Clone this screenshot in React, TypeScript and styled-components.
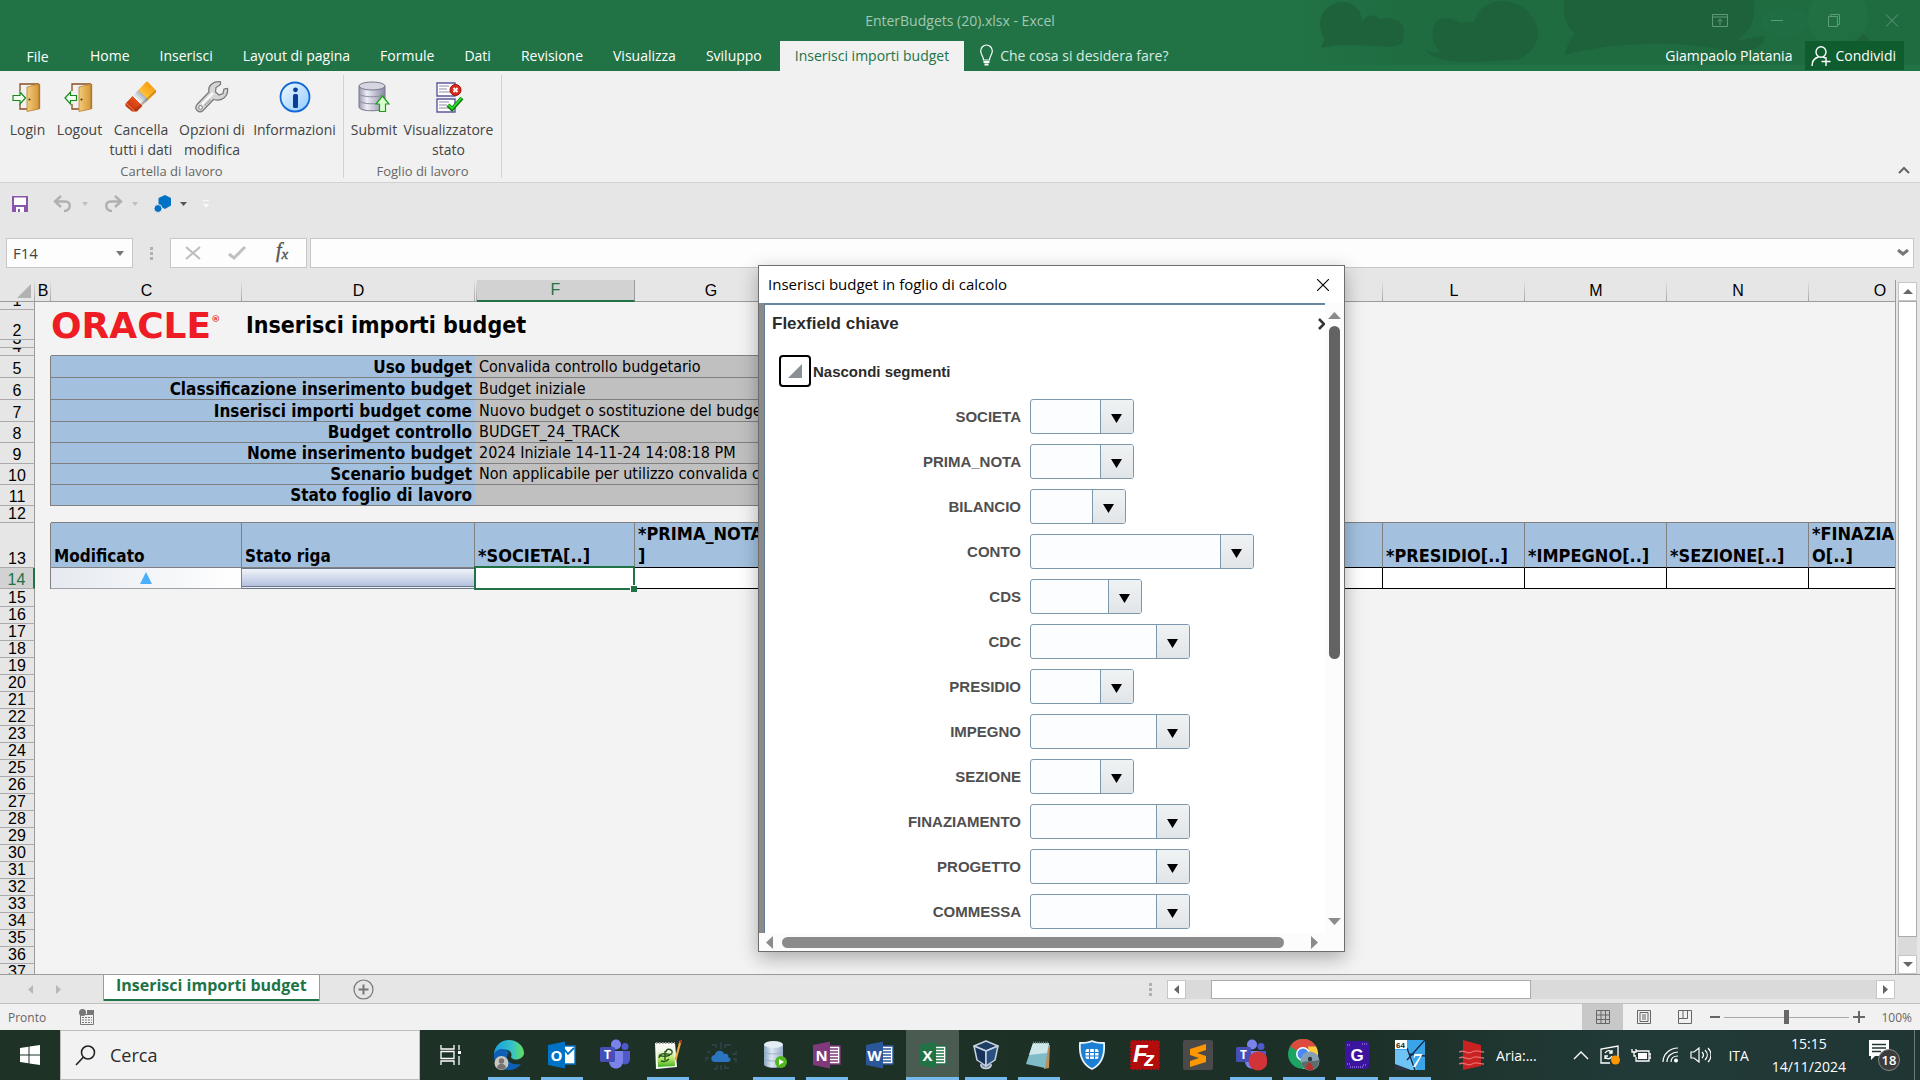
import React from "react";
import styled, { createGlobalStyle, css } from "styled-components";

const UI = `"Open Sans", "Noto Sans", sans-serif`;
const SHEET = `"DejaVu Sans Condensed", "DejaVu Sans", sans-serif`;
const ARIAL = `"Liberation Sans", Arial, sans-serif`;
const GREEN = "#217346";

const Global = createGlobalStyle`
  * { box-sizing: border-box; }
  body { margin: 0; overflow: hidden; background: #e6e6e6; font-family: ${UI}; font-size: 14px; color: #444; }
  button { font: inherit; color: inherit; background: none; border: 0; padding: 0; margin: 0; }
  input { font: inherit; }
  svg { display: block; flex: none; }
`;

const Page = styled.div`
  display: flex;
  flex-direction: column;
  height: 100vh;
`;

/* ---------- title bar and tabs ---------- */
const Header = styled.header`
  position: relative;
  background: ${GREEN};
  color: #fff;
  flex: none;
`;
const HeaderArt = styled.svg`
  position: absolute;
  right: 0;
  top: 0;
`;
const TitleRow = styled.div`
  position: relative;
  display: grid;
  grid-template-columns: 1fr auto 1fr;
  align-items: center;
  height: 41px;
  color: #a3c7b3;
`;
const DocTitle = styled.h1`
  margin: 0;
  grid-column: 2;
  font-size: 14px;
  font-weight: 400;
`;
const WindowButtons = styled.div`
  display: flex;
  justify-content: flex-end;
  gap: 41px;
  padding-right: 21px;
  color: #5f9a79;
`;
const TabRow = styled.nav`
  position: relative;
  display: flex;
  align-items: stretch;
  height: 30px;
`;
const Tab = styled.button<{ $active?: boolean; $file?: boolean }>`
  padding: 0 15px 2px;
  white-space: nowrap;
  ${(p) => p.$file && css`width: 75px; padding-bottom: 0;`}
  ${(p) => p.$active && css`margin-left: 3px; background: #f1f1f1; color: ${GREEN};`}
`;
const TellMe = styled.button`
  display: flex;
  align-items: center;
  gap: 7px;
  padding: 0 16px 2px;
  color: #d9ebe0;
`;
const Account = styled.button`
  margin-left: auto;
  padding: 0 13px 2px;
`;
const Share = styled.button`
  display: flex;
  align-items: center;
  gap: 4px;
  height: 29px;
  margin-right: 16px;
  padding: 0 8px 0 6px;
  background: #0f5c2e;
`;

/* ---------- ribbon ---------- */
const Ribbon = styled.section`
  display: flex;
  flex: none;
  height: 112px;
  padding-top: 4px;
  background: #f1f1f1;
  border-bottom: 1px solid #d2d2d2;
`;
const RibbonGroup = styled.div`
  display: flex;
  flex-direction: column;
  height: 103px;
  padding: 0 4px;
  border-right: 1px solid #d2d2d2;
`;
const GroupButtons = styled.div`
  display: flex;
  flex: 1;
`;
const RibbonButton = styled.button<{ $w: number }>`
  display: flex;
  flex-direction: column;
  align-items: center;
  gap: 7px;
  width: ${(p) => p.$w}px;
  padding-top: 6px;
  line-height: 20px;
  white-space: pre;
`;
const GroupName = styled.div`
  font-size: 13px;
  line-height: 14px;
  text-align: center;
  color: #666;
`;
const Collapse = styled.button`
  display: flex;
  align-items: flex-end;
  margin-left: auto;
  padding: 0 10px 8px;
  color: #666;
`;

/* ---------- quick access and formula bar ---------- */
const QuickBar = styled.div`
  display: flex;
  align-items: center;
  gap: 10px;
  height: 41px;
  margin-bottom: 2px;
  padding: 0 12px;
  flex: none;
`;
const QuickPair = styled.div<{ $before: number }>`
  display: flex;
  align-items: center;
  gap: 8px;
  margin-left: ${(p) => p.$before}px;
`;
const FormulaRow = styled.div`
  display: flex;
  align-items: stretch;
  height: 30px;
  margin: 12px 6px 12px;
  flex: none;
`;
const NameBox = styled.div`
  display: flex;
  align-items: center;
  width: 127px;
  padding: 0 8px 0 0;
  background: #fdfdfd;
  border: 1px solid #c6c6c6;
`;
const NameInput = styled.input`
  flex: 1;
  min-width: 0;
  padding: 0 6px;
  border: 0;
  background: none;
  font-size: 15px;
  color: #444;
`;
const Grip = styled.div`
  display: flex;
  align-items: center;
  justify-content: center;
  width: 37px;
`;
const FormulaTools = styled.div`
  display: flex;
  align-items: center;
  justify-content: space-between;
  width: 137px;
  margin-right: 3px;
  padding: 0 14px;
  background: #fdfdfd;
  border: 1px solid #c6c6c6;
`;
const FormulaBox = styled.div`
  display: flex;
  flex: 1;
  align-items: center;
  padding-right: 4px;
  background: #fdfdfd;
  border: 1px solid #c6c6c6;
`;

/* ---------- sheet ---------- */
const SheetArea = styled.main`
  display: flex;
  flex: 1;
  min-height: 0;
  border-bottom: 1px solid #9b9b9b;
`;
const SheetClip = styled.div`
  flex: 1;
  min-width: 0;
  overflow: hidden;
  background: linear-gradient(#e6e6e6 22px, #f3f3f3 22px);
  border-right: 1px solid #9b9b9b;
`;
const Grid = styled.table`
  width: 1951px;
  table-layout: fixed;
  border-collapse: separate;
  border-spacing: 0;
  font-family: ${SHEET};
  font-size: 16px;
  color: #000;
  td, th { padding: 0; font-weight: 400; }
`;
const ColHead = styled.th<{ $on?: boolean }>`
  height: 22px;
  font-family: ${ARIAL};
  line-height: 20px;
  vertical-align: bottom;
  background: linear-gradient(#e6e6e6, #a6a6a6) right / 1px 100% no-repeat #e6e6e6;
  border-bottom: 1px solid #9b9b9b;
  ${(p) => p.$on && css`
    background: #d2d2d2;
    color: ${GREEN};
    border-bottom: 2px solid ${GREEN};
    border-right: 1px solid #9b9b9b;
  `}
`;
const Corner = styled(ColHead)`
  svg { margin: 0 0 3px 17px; }
`;
const RowHead = styled.th<{ $on?: boolean }>`
  font-family: ${ARIAL};
  background: #e6e6e6;
  border-right: 1px solid #9b9b9b;
  border-bottom: 1px solid #ababab;
  ${(p) => p.$on && css`
    background: #d2d2d2;
    color: ${GREEN};
    border-right: 2px solid ${GREEN};
  `}
`;
const Clip = styled.div<{ $h: number }>`
  display: flex;
  align-items: flex-end;
  justify-content: center;
  height: ${(p) => p.$h - 1}px;
  line-height: 17px;
  overflow: hidden;
`;
const Logo = styled.div`
  display: flex;
  align-items: center;
  height: 29px;
  color: #ee1c25;
  font-family: "DejaVu Sans", sans-serif;
  font-size: 36px;
  font-weight: 700;
  line-height: 29px;
  sup { font-size: 9px; line-height: 16px; align-self: flex-start; }
`;
const SheetTitle = styled.td`
  line-height: 29px;
  font-size: 23px;
  padding-left: 4px !important;
  strong { display: block; height: 29px; white-space: nowrap; }
`;
const InfoLabel = styled.td`
  background: #a3c1df;
  border-bottom: 1px solid #808080;
  font-size: 17px;
  text-align: right;
  vertical-align: bottom;
  padding-right: 3px !important;
  line-height: 20px;
  white-space: nowrap;
  overflow: hidden;
`;
const InfoValue = styled.td`
  background: #c0c0c0;
  border-bottom: 1px solid #808080;
  padding-left: 4px !important;
  line-height: 20px;
  vertical-align: bottom;
  white-space: nowrap;
  overflow: hidden;
`;
const EdgeCell = styled.td`
  border-right: 1px solid #808080;
`;
const TopLine = styled.td`
  border-bottom: 1px solid #808080;
`;
const HeadCell = styled.td<{ $dark?: boolean; $key?: boolean }>`
  height: 45px;
  vertical-align: bottom;
  background: #a3c1df;
  border-right: 1px solid #808080;
  border-bottom: 1px solid ${(p) => (p.$dark ? "#000" : "#808080")};
  padding-left: 3px !important;
  font-size: ${(p) => (p.$key ? 18 : 17)}px;
  line-height: 22px;
  white-space: pre;
  overflow: hidden;
`;
const EmptyCell = styled.td`
  background: #fff;
  border-right: 1px solid #000;
  border-bottom: 1px solid #000;
`;
const ChangedCell = styled.td`
  background: linear-gradient(90deg, #e6eaf0, #fff);
  border-right: 1px solid #808080;
  border-bottom: 1px solid #a0a0a8;
  svg { margin: 0 auto; }
`;
const StatusCell = styled.td`
  background: linear-gradient(#f0f3fa, #b5c1de);
  border-top: 1px solid #6b7888;
  border-bottom: 3px double #6b7888;
`;
const ActiveCell = styled.td`
  position: relative;
  background: #fff;
  &::before {
    content: "";
    position: absolute;
    inset: -2px 0 -1px -1px;
    border: 2px solid ${GREEN};
  }
  &::after {
    content: "";
    position: absolute;
    right: -2px;
    bottom: -3px;
    width: 6px;
    height: 6px;
    background: ${GREEN};
    border: solid #fff;
    border-width: 1px 0 0 1px;
  }
`;

/* ---------- scroll bars ---------- */
const VScroll = styled.div`
  display: flex;
  flex-direction: column;
  width: 24px;
  padding: 2px 3px 0 2px;
`;
const ScrollButton = styled.button`
  display: grid;
  place-items: center;
  width: 19px;
  height: 19px;
  flex: none;
  background: #fff;
  border: 1px solid #c6c6c6;
  color: #666;
`;
const VTrack = styled.div`
  flex: 1;
  padding-bottom: 18px;
  background: #dadada;
`;
const Thumb = styled.div`
  height: 100%;
  background: #fff;
  border: 1px solid #ababab;
`;
const SheetTabs = styled.div`
  display: flex;
  align-items: center;
  height: 29px;
  flex: none;
  padding-right: 25px;
  border-bottom: 1px solid #c0c0c0;
`;
const TabNav = styled.div`
  display: flex;
  gap: 23px;
  width: 103px;
  padding-left: 28px;
  color: #b8b8b8;
`;
const SheetTab = styled.button`
  align-self: flex-start;
  height: 26px;
  padding: 0 12px 5px;
  background: #fff;
  border: solid #9b9b9b;
  border-width: 0 1px;
  box-shadow: inset 0 -2px ${GREEN};
  color: ${GREEN};
  font-size: 16px;
  font-weight: 700;
  line-height: 21px;
`;
const AddTab = styled.button`
  margin-left: 33px;
  color: #777;
`;
const HScroll = styled.div`
  display: flex;
  align-items: center;
  width: 746px;
  margin-left: auto;
`;
const HTrack = styled.div`
  flex: 1;
  height: 19px;
  padding: 0 345px 0 25px;
  background: #dadada;
`;
const SplitGrip = styled.div`
  width: 18px;
`;

/* ---------- status bar ---------- */
const StatusBar = styled.footer`
  display: flex;
  align-items: center;
  height: 26px;
  flex: none;
  padding: 0 8px;
  background: #f1f1f1;
  font-size: 12px;
  color: #666;
`;
const RecordIcon = styled.button`
  margin-left: 33px;
`;
const Views = styled.div`
  display: flex;
  align-self: stretch;
  margin: 0 5px 0 auto;
`;
const ViewButton = styled.button<{ $on?: boolean }>`
  display: grid;
  place-items: center;
  width: 41px;
  background: ${(p) => (p.$on ? "#c8c8c8" : "none")};
`;
const ZoomRange = styled.input`
  appearance: none;
  width: 125px;
  height: 17px;
  margin: 0 4px;
  background: linear-gradient(#a8a8a8, #a8a8a8) center / 100% 1px no-repeat;
  &::-webkit-slider-thumb {
    appearance: none;
    width: 5px;
    height: 14px;
    background: #666;
  }
`;
const ZoomValue = styled.span`
  width: 47px;
  text-align: right;
`;

/* ---------- taskbar ---------- */
const Taskbar = styled.div`
  display: flex;
  height: 50px;
  flex: none;
  background: linear-gradient(90deg, #1e3226, #1c3027 70%, #213a38 85%, #203634);
  color: #fff;
`;
const Start = styled.button`
  display: grid;
  place-items: center;
  width: 60px;
`;
const Search = styled.label`
  display: flex;
  align-items: center;
  gap: 14px;
  width: 360px;
  padding: 0 14px;
  background: #f2f2f2;
  border: 1px solid #bdbdbd;
`;
const SearchInput = styled.input`
  flex: 1;
  min-width: 0;
  padding: 0;
  border: 0;
  background: none;
  font-size: 18px;
  color: #2b2b2b;
  &::placeholder { color: #2b2b2b; opacity: 1; }
`;
const Apps = styled.div`
  display: flex;
`;
const TaskButton = styled.button<{ $open?: boolean; $on?: boolean; $w?: number }>`
  display: grid;
  place-items: center;
  width: ${(p) => p.$w ?? 53}px;
  background: linear-gradient(#76b9ed, #76b9ed) bottom / ${(p) => (p.$on ? "100%" : "42px")}
    ${(p) => (p.$open ? "3px" : "0")} no-repeat ${(p) => (p.$on ? "#4a5b52" : "transparent")};
`;
const Tray = styled.div`
  display: flex;
  align-items: center;
  margin-left: auto;
`;
const AriaButton = styled.button`
  display: flex;
  align-items: center;
  gap: 12px;
  margin-right: 36px;
`;
const TrayIcons = styled.div`
  display: flex;
  align-items: center;
  gap: 11px;
`;
const Lang = styled.button`
  width: 24px;
  margin: 0 21px 0 16px;
`;
const Clock = styled.button`
  line-height: 23px;
  margin-right: 22px;
`;
const Notices = styled.button`
  margin-right: 14px;
`;
const ShowDesktop = styled.button`
  align-self: stretch;
  width: 6px;
  border-left: 1px solid #6b7a76;
`;

/* ---------- dialog ---------- */
const Dialog = styled.section`
  position: absolute;
  left: 758px;
  top: 265px;
  display: flex;
  flex-direction: column;
  width: 587px;
  height: 687px;
  background: #fff;
  border: 1px solid #6e6e6e;
  box-shadow: 0 6px 18px rgba(0, 0, 0, 0.3);
  color: #000;
`;
const DialogBar = styled.div`
  display: flex;
  align-items: center;
  justify-content: space-between;
  height: 37px;
  padding: 0 15px 0 9px;
  flex: none;
`;
const DialogTitle = styled.h2`
  margin: 0;
  font-size: 15px;
  font-weight: 400;
  line-height: 20px;
  padding-bottom: 2px;
`;
const DialogMain = styled.div`
  display: flex;
  flex: 1;
  min-height: 0;
  padding-left: 5px;
  background: linear-gradient(90deg, #8a8a8a 5px, #fcfcfc 5px);
`;
const Pane = styled.div`
  flex: 1;
  min-width: 0;
  background: #fff;
  border-left: 1px solid #5d7d98;
  border-top: 2px solid #6787a0;
  font-family: ${ARIAL};
  overflow: hidden;
`;
const PaneHead = styled.div`
  display: flex;
  align-items: center;
  justify-content: space-between;
  height: 38px;
  padding-left: 7px;
`;
const PaneTitle = styled.h3`
  margin: 0;
  font-size: 17px;
  font-weight: 700;
  color: #2b2b2b;
`;
const Disclosure = styled.div`
  display: flex;
  align-items: center;
  gap: 2px;
  margin: 12px 0 12px 14px;
  font-size: 15px;
  font-weight: 700;
  color: #2b2b2b;
`;
const DisclosureButton = styled.button`
  display: grid;
  place-items: center;
  width: 32px;
  height: 32px;
  border: 2px solid #000;
  border-radius: 4px;
`;
const Field = styled.div`
  display: grid;
  grid-template-columns: 256px auto;
  justify-content: start;
  align-items: center;
  column-gap: 9px;
  height: 35px;
  margin-bottom: 10px;
`;
const FieldLabel = styled.label`
  font-size: 15px;
  font-weight: 700;
  text-align: right;
  color: #4f4f4f;
`;
const Combo = styled.div<{ $w: number }>`
  display: flex;
  width: ${(p) => p.$w}px;
  height: 35px;
  background: #fcfdfe;
  border: 1px solid #7e98ab;
  border-radius: 3px;
  overflow: hidden;
`;
const ComboInput = styled.input`
  flex: 1;
  min-width: 0;
  padding: 0 6px;
  border: 0;
  background: none;
  font-size: 15px;
`;
const ComboButton = styled.button`
  display: grid;
  place-items: center;
  width: 33px;
  padding: 3px 2px 0 0;
  border-left: 1px solid #7e98ab;
  background: linear-gradient(#f0f3f4, #e1e5e8);
`;
const PaneScroll = styled.div`
  display: flex;
  flex-direction: column;
  align-items: center;
  gap: 7px;
  width: 19px;
  padding: 9px 0 8px;
  color: #8b8b8b;
`;
const PaneTrack = styled.div`
  flex: 1;
  width: 11px;
`;
const PaneThumb = styled.div`
  height: 57%;
  border-radius: 6px;
  background: #636363;
`;
const BottomScroll = styled.div`
  display: flex;
  align-items: center;
  gap: 9px;
  height: 18px;
  flex: none;
  padding: 0 26px 0 7px;
  background: #fcfcfc;
  color: #8b8b8b;
`;
const BottomTrack = styled.div`
  flex: 1;
  padding-right: 18px;
`;
const BottomThumb = styled.div`
  height: 11px;
  border-radius: 6px;
  background: #8b8b8b;
`;

/* ---------- small drawings ---------- */
type Dir = "up" | "down" | "left" | "right";
const triangles: Record<Dir, string> = {
  up: "0,10 5,0 10,10",
  down: "0,0 10,0 5,10",
  left: "10,0 0,5 10,10",
  right: "0,0 10,5 0,10",
};
const Tri = ({ d, w = 10, h = 5, c = "currentColor" }: { d: Dir; w?: number; h?: number; c?: string }) => (
  <svg width={w} height={h} viewBox="0 0 10 10" preserveAspectRatio="none"><polygon points={triangles[d]} fill={c} /></svg>
);
const Dots = () => (
  <svg width="3" height="13" fill="#b0b0b0"><path d="M0 0h3v3H0zM0 5h3v3H0zM0 10h3v3H0z" /></svg>
);

const DoorDefs = () => (
  <defs><linearGradient id="door"><stop offset="0" stopColor="#f4cc78" /><stop offset="1" stopColor="#d4973a" /></linearGradient></defs>
);
const Door = ({ out }: { out?: boolean }) => (
  <svg width="32" height="32" viewBox="0 0 32 32">
    <DoorDefs />
    <path d="M8 10V3h19M8 23v5h7" fill="none" stroke="#8a4e20" strokeWidth="1.300" />
    <path d="M15 6l12-3v25l-12 2.500z" fill="url(#door)" stroke="#b98232" strokeWidth=".8" />
    <path d="M27.500 3v25" stroke="#b07628" strokeWidth="1.300" />
    <circle cx="17.500" cy="18.500" r="1.100" fill="#5a3a0d" />
    {out
      ? <path d="M1 17l5.500-6v3.500h6v5h-6V23z" fill="#f0fff0" stroke="#188a18" strokeWidth="1.200" />
      : <path d="M13.500 17L8 11v3.500H1v5h7V23z" fill="#f0fff0" stroke="#188a18" strokeWidth="1.200" />}
  </svg>
);
const Eraser = () => (
  <svg width="32" height="32" viewBox="0 0 32 32">
    <defs><linearGradient id="er" x1="0" y1="1" x2="1" y2="0"><stop offset="0" stopColor="#b82a06" /><stop offset=".37" stopColor="#e8501e" /><stop offset=".38" stopColor="#f4f7f9" /><stop offset=".56" stopColor="#aab5bd" /><stop offset=".57" stopColor="#ffc13a" /><stop offset="1" stopColor="#f08c00" /></linearGradient></defs>
    <path d="M.5 22.500L21 1l1.500-.5 8.500 9v2L12 30.500H7L.5 25z" fill="url(#er)" />
    <path d="M1 22l9 8.500" stroke="#e98a60" strokeWidth="1" />
    <path d="M9 30l2 .5 20-20v-1.500L10 27.500z" fill="#5a2a00" opacity=".3" />
  </svg>
);
const Wrench = () => (
  <svg width="34" height="32" viewBox="0 0 34 32">
    <path d="M25.500.8C19 0 12.500 4 14 11L2 23.500c-3.500 4.500 2 9.500 6 6L18.500 18.500c8 2.500 15-3 14-11L29 8l-1 4.500-4 1.500-3.500-3 .5-4.500 4.500-3z" fill="#d6d6d6" stroke="#777" strokeWidth="1.200" />
    <path d="M7 23.500L18 12" stroke="#fafafa" strokeWidth="2.500" /><path d="M10 24l5-5" stroke="#999" strokeWidth="2" strokeDasharray="1 1" />
    <circle cx="5.500" cy="26.500" r="1.800" fill="#fff" stroke="#777" />
  </svg>
);
const Info = () => (
  <svg width="32" height="32" viewBox="0 0 32 32">
    <defs><linearGradient id="inf" x1="0" y1="0" x2="1" y2="1"><stop offset="0" stopColor="#f4fbff" /><stop offset="1" stopColor="#8ec9ff" /></linearGradient></defs>
    <circle cx="16" cy="16" r="14.500" fill="url(#inf)" stroke="#1268d6" strokeWidth="1.800" />
    <circle cx="16.500" cy="8.800" r="2.400" fill="#0a3c9b" />
    <rect x="14" y="13" width="5" height="14" rx="1.500" fill="#0a3c9b" />
  </svg>
);
const Submit = () => (
  <svg width="32" height="32" viewBox="0 0 32 32">
    <defs><linearGradient id="cyl"><stop offset="0" stopColor="#9a9aae" /><stop offset=".3" stopColor="#eeeef8" /><stop offset="1" stopColor="#8888a0" /></linearGradient></defs>
    <path d="M1 5v21c0 5 26 5 26 0V5z" fill="url(#cyl)" stroke="#77778c" />
    <ellipse cx="14" cy="5" rx="13" ry="4" fill="#d6d6e2" stroke="#77778c" />
    <path d="M1 12c0 5 26 5 26 0M1 19c0 5 26 5 26 0" fill="none" stroke="#8a8a9e" />
    <path d="M24.500 15l6.500 8h-3.500v7.500h-6V23H18z" fill="#d9ffd0" stroke="#1c9a1c" strokeWidth="1.200" />
  </svg>
);
const Viewer = () => (
  <svg width="32" height="32" viewBox="0 0 32 32">
    <path d="M4 2h18v13H4zM4 18h18v13H4z" fill="#fff" stroke="#5a5a9c" strokeWidth="1.400" />
    <path d="M6 5h10M6 8h8M6 11h12M6 21h10M6 24h8M6 27h12" stroke="#8a8aa8" />
    <circle cx="22.500" cy="9" r="5.500" fill="#e0281c" stroke="#971108" />
    <path d="M20.500 7l4 4m0-4l-4 4" stroke="#fff" strokeWidth="1.800" />
    <path d="M15 24l4 4 10-11" fill="none" stroke="#0b7a0b" strokeWidth="4" />
    <path d="M15.500 24l3.500 3.500 9.500-10.500" fill="none" stroke="#2fe02f" strokeWidth="1.800" />
  </svg>
);

const groups = [
  { name: "Cartella di lavoro", items: [
    { t: "Login", w: 47, i: <Door /> },
    { t: "Logout", w: 57, i: <Door out /> },
    { t: "Cancella\ntutti i dati", w: 66, i: <Eraser /> },
    { t: "Opzioni di\nmodifica", w: 76, i: <Wrench /> },
    { t: "Informazioni", w: 89, i: <Info /> },
  ] },
  { name: "Foglio di lavoro", items: [
    { t: "Submit", w: 52, i: <Submit /> },
    { t: "Visualizzatore\nstato", w: 97, i: <Viewer /> },
  ] },
];

const tabs = ["Home", "Inserisci", "Layout di pagina", "Formule", "Dati", "Revisione", "Visualizza", "Sviluppo"];

const cols: [string, number][] = [
  ["", 35], ["B", 16], ["C", 191], ["D", 233], ["", 2], ["F", 158], ["G", 152], ["H", 149], ["I", 149],
  ["J", 149], ["K", 149], ["L", 142], ["M", 142], ["N", 142], ["O", 142],
];

const info: [number, number, string, string][] = [
  [5, 22, "Uso budget", "Convalida controllo budgetario"],
  [6, 22, "Classificazione inserimento budget", "Budget iniziale"],
  [7, 22, "Inserisci importi budget come", "Nuovo budget o sostituzione del budget"],
  [8, 21, "Budget controllo", "BUDGET_24_TRACK"],
  [9, 21, "Nome inserimento budget", "2024 Iniziale 14-11-24 14:08:18 PM"],
  [10, 21, "Scenario budget", "Non applicabile per utilizzo convalida controllo"],
  [11, 21, "Stato foglio di lavoro", ""],
];

const heads = ["*PRIMA_NOTA[..\n]", "*BILANCIO[..]", "*CONTO[..]", "*CDS[..]", "*CDC[..]", "*PRESIDIO[..]", "*IMPEGNO[..]", "*SEZIONE[..]", "*FINAZIAMENT\nO[..]"];
const tailRows = Array.from({ length: 23 }, (_, i) => 15 + i);

const fields: [string, number][] = [
  ["SOCIETA", 104], ["PRIMA_NOTA", 104], ["BILANCIO", 96], ["CONTO", 224], ["CDS", 112], ["CDC", 160],
  ["PRESIDIO", 104], ["IMPEGNO", 160], ["SEZIONE", 104], ["FINAZIAMENTO", 160], ["PROGETTO", 160], ["COMMESSA", 160],
];

const RowNo = ({ n, h, on }: { n: number; h: number; on?: boolean }) => (
  <RowHead scope="row" $on={on}><Clip $h={h}>{n}</Clip></RowHead>
);

const Sheet = () => (
  <Grid>
    <colgroup>{cols.map(([, w], i) => <col key={i} style={{ width: w }} />)}</colgroup>
    <thead>
      <tr>
        {cols.map(([c], i) => i === 0
          ? <Corner key={i}><svg width="14" height="14"><path d="M14 0v14H0z" fill="#b2b2b2" /></svg></Corner>
          : <ColHead key={i} scope="col" $on={c === "F"}>{c}</ColHead>)}
      </tr>
    </thead>
    <tbody>
      <tr><RowNo n={1} h={8} /><td colSpan={14} /></tr>
      <tr>
        <RowNo n={2} h={30} />
        <td />
        <td><Logo>ORACLE<sup>®</sup></Logo></td>
        <SheetTitle colSpan={4}><strong>Inserisci importi budget</strong></SheetTitle>
      </tr>
      <tr><RowNo n={3} h={8} /><td colSpan={14} /></tr>
      <tr><RowNo n={4} h={8} /><td /><TopLine colSpan={6} /></tr>
      {info.map(([n, h, a, b]) => (
        <tr key={n}>
          <RowNo n={n} h={h} />
          <EdgeCell />
          <InfoLabel colSpan={2}><strong>{a}</strong></InfoLabel>
          <InfoValue colSpan={4}>{b}</InfoValue>
        </tr>
      ))}
      <tr><RowNo n={12} h={17} /><td /><TopLine colSpan={13} /></tr>
      <tr>
        <RowNo n={13} h={45} />
        <EdgeCell />
        <HeadCell><strong>Modificato</strong></HeadCell>
        <HeadCell><strong>Stato riga</strong></HeadCell>
        <HeadCell colSpan={2} $key><strong>*SOCIETA[..]</strong></HeadCell>
        {heads.map((t) => <HeadCell key={t} $dark $key><strong>{t}</strong></HeadCell>)}
      </tr>
      <tr>
        <RowNo n={14} h={21} on />
        <EdgeCell />
        <ChangedCell><svg width="12" height="12"><path d="M6 0l6 12H0z" fill="#4aaefc" /></svg></ChangedCell>
        <StatusCell />
        <ActiveCell colSpan={2} />
        {heads.map((t) => <EmptyCell key={t} />)}
      </tr>
      {tailRows.map((n) => <tr key={n}><RowNo n={n} h={n === 15 ? 18 : 17} /><td colSpan={14} /></tr>)}
    </tbody>
  </Grid>
);

/* ---------- taskbar drawings ---------- */
const Office = ({ l, c, d, children }: { l: string; c: string; d: string; children?: React.ReactNode }) => (
  <svg width="28" height="28" viewBox="0 0 28 28">
    <path d="M14 5h13v18H14z" fill="#fff" stroke={c} strokeWidth="1.400" />
    {children ?? <path d="M17 8h8M17 11h8M17 14h8M17 17h8M17 20h8" stroke={d} strokeWidth="1.500" />}
    <path d="M0 4l17-3.500v27L0 24z" fill={c} />
    <text x="8.500" y="19.500" fontFamily="Open Sans" fontWeight="700" fontSize="15" fill="#fff" textAnchor="middle">{l}</text>
  </svg>
);
const TeamsIcon = ({ busy }: { busy?: boolean }) => (
  <svg width="32" height="32" viewBox="0 0 32 32">
    <circle cx="17" cy="5.500" r="5" fill="#7b83eb" /><circle cx="26" cy="7.500" r="3.500" fill="#5059c9" />
    <path d="M22 12h9v8c0 6-7 7-9 3z" fill="#5059c9" /><path d="M10 12h14v10c0 10-14 10-14 0z" fill="#7b83eb" />
    <rect x="1" y="8" width="15" height="15" rx="1.500" fill="#464eb8" />
    <text x="8.500" y="20" fontFamily="Open Sans" fontWeight="700" fontSize="12" fill="#fff" textAnchor="middle">T</text>
    {busy && <circle cx="23" cy="22" r="9.500" fill="#d13438" />}
  </svg>
);
const TaskView = () => (
  <svg width="22" height="22" viewBox="0 0 22 22" fill="none" stroke="#fff" strokeWidth="1.300">
    <path d="M1 1v4h13V1M1 21v-4h13v4M1 7.500h13v7H1zM19 1v5M19 12v9" /><path d="M18 7h3v3h-3z" fill="#fff" stroke="none" />
  </svg>
);
const Edge = () => (
  <svg width="32" height="32" viewBox="0 0 32 32">
    <defs><linearGradient id="ed"><stop offset="0" stopColor="#1b9de2" /><stop offset=".6" stopColor="#35c1c8" /><stop offset="1" stopColor="#66e05a" /></linearGradient></defs>
    <path d="M1 16C1 7 8 1 16 1s15 6 15 13c0 6-10 9-13 4 2-4-2-8-7-7C6 12 2 14 1 16z" fill="url(#ed)" />
    <path d="M1 15c3-6 12-7 15-1-4 3-3 13 12 11-3 4-7 6-12 6C7 31 0 24 1 15z" fill="#0f5fb4" />
    <circle cx="8.500" cy="24" r="7" fill="#c9c6c2" /><circle cx="8.500" cy="22" r="2.700" fill="#77736f" /><path d="M4 28.500c1-5 8-5 9 0-2 2.500-7 2.500-9 0z" fill="#77736f" />
  </svg>
);
const Npp = () => (
  <svg width="30" height="30" viewBox="0 0 30 30">
    <defs><linearGradient id="npp" x1="0" y1="0" x2="0" y2="1"><stop offset=".2" stopColor="#f4f8ee" /><stop offset=".6" stopColor="#b9e86a" /><stop offset="1" stopColor="#3fb020" /></linearGradient></defs>
    <path d="M2 3h20l2 24-21 2z" fill="#f8faf4" /><path d="M4 6h17l1 20-17 1z" fill="url(#npp)" /><path d="M3 3h19" stroke="#999" strokeWidth="2" strokeDasharray="1.500 1.500" />
    <path d="M6 18c1-6 6-4 8-4s6 2 5-3c-2-3-6-2-6 1M6 15c4 2 7 2 11 0M8 21c3 1 6 0 8-2M12 11v9" fill="none" stroke="#25551d" strokeWidth="1.400" />
    <path d="M27.500 1l-5 19" stroke="#e9a83a" strokeWidth="2.200" /><path d="M28 0l-.7 3" stroke="#b2302a" strokeWidth="2.200" />
  </svg>
);
const CloudIcon = () => (
  <svg width="32" height="32" viewBox="0 0 32 32">
    <path d="M10 23c-5 0-5-7 0-7 0-5 8-6 9-1 4-1 5 2 4 3 4 1 3 5 0 5z" fill="#2a74c0" />
    <path d="M16 10V3M11 9V6H7M20 9V6h6M5 13H2M27 15h4V12M4 19H1v3M28 20h3v4M12 26v4H9M16 26v5M20 26v3h4" fill="none" stroke="#34464e" strokeWidth="1.300" />
  </svg>
);
const Db = () => (
  <svg width="28" height="32" viewBox="0 0 28 32">
    <defs><linearGradient id="db"><stop offset="0" stopColor="#8aa6c2" /><stop offset=".4" stopColor="#dce8f2" /><stop offset="1" stopColor="#96aec6" /></linearGradient></defs>
    <path d="M4 5v20c0 5 19 5 19 0V5z" fill="url(#db)" /><ellipse cx="13.500" cy="5.500" rx="9.500" ry="3.500" fill="#e4eef6" />
    <path d="M4 12c0 4 19 4 19 0M4 19c0 4 19 4 19 0" fill="none" stroke="#90a8c0" strokeWidth=".8" />
    <circle cx="21" cy="23" r="6" fill="#4fb81e" /><path d="M19 20l5 3-5 3z" fill="#fff" />
  </svg>
);
const VBox = () => (
  <svg width="28" height="32" viewBox="0 0 28 32" stroke="#c9d3e0" strokeWidth="1.500" strokeLinejoin="round">
    <path d="M9 25c-2 6 12 6 10 0" fill="#8190a8" />
    <path d="M2 7l12-5 12 5-12 5z" fill="#1f3e66" /><path d="M2 7l12 5v15L5 21z" fill="#17335a" /><path d="M26 7l-12 5v15l9-6z" fill="#2a5080" />
  </svg>
);
const Note = () => (
  <svg width="30" height="30" viewBox="0 0 30 30">
    <path d="M20 3l6 2-1 23-5 1z" fill="#b98e57" /><path d="M9 3h16l-4 25L2 24z" fill="#7fbcc8" /><path d="M9 3h16l-2 10L5 15z" fill="#cfe6ea" />
    <path d="M9 2.500h16" stroke="#777" strokeWidth="2" strokeDasharray="1 1" />
  </svg>
);
const Shield = () => (
  <svg width="28" height="30" viewBox="0 0 28 30">
    <path d="M14 1c4 2 8 2 12 2 1 12-2 21-12 26C4 24 1 15 2 3c4 0 8 0 12-2z" fill="#1c7fd4" stroke="#e8f1f8" strokeWidth="1.800" />
    <rect x="7.500" y="9" width="13" height="10" rx="2" fill="#fff" /><path d="M11.500 9v10M16.500 9v10M7 12.500h14M7 16h14" stroke="#1c7fd4" strokeWidth="1.200" />
  </svg>
);
const Fz = () => (
  <svg width="30" height="30" viewBox="0 0 30 30">
    <rect x="1" y="1" width="28" height="28" fill="#b30c0c" stroke="#b30c0c" strokeWidth="2" strokeDasharray="2 1.500" />
    <text x="3" y="22" fontFamily="Liberation Sans" fontStyle="italic" fontWeight="700" fontSize="24" fill="#fff">F</text>
    <text x="14" y="26" fontFamily="Liberation Sans" fontStyle="italic" fontWeight="700" fontSize="21" fill="#fff">z</text>
  </svg>
);
const Sublime = () => (
  <svg width="30" height="30" viewBox="0 0 30 30">
    <rect width="30" height="30" rx="2" fill="#4a4a4a" /><path d="M7 9l16-5v6l-9 3 9 3v6L7 27v-6l9-3-9-3z" fill="#ff9800" />
  </svg>
);
const Chrome = () => (
  <svg width="32" height="32" viewBox="0 0 32 32">
    <circle cx="15" cy="15" r="15" fill="#1da462" /><path d="M15 15L2 7.500A15 15 0 0 1 28 7.500z" fill="#dd4b3e" /><path d="M15 0a15 15 0 0 1 13 7.500H15z" fill="#dd4b3e" />
    <path d="M28 7.500A15 15 0 0 1 15 30l7-11-2-11.500z" fill="#ffcd40" /><circle cx="15" cy="15" r="7" fill="#fff" /><circle cx="15" cy="15" r="5.500" fill="#4a8af4" />
    <circle cx="22" cy="22" r="9.500" fill="#86a0b4" /><path d="M13 24c5-3 12-1 18-3 0 6-4 10-9 10s-8-3-9-7z" fill="#5e6c6c" /><path d="M18 30c0-8 7-8 7 1-2 .5-5 .5-7-1z" fill="#b8332f" /><circle cx="22" cy="20" r="2.200" fill="#2c3a3a" />
  </svg>
);
const GApp = () => (
  <svg width="24" height="28" viewBox="0 0 24 28">
    <rect width="24" height="28" rx="4" fill="#3b14a0" /><path d="M2 4h4M17 3h5M2 23h3M18 24h4M5 26h14" stroke="#b9a3f0" strokeDasharray="1 1" />
    <text x="12" y="20" fontFamily="Liberation Sans" fontWeight="700" fontSize="17" fill="#fff" textAnchor="middle">G</text>
  </svg>
);
const Seven = () => (
  <svg width="30" height="30" viewBox="0 0 30 30">
    <rect width="30" height="30" fill="#3aa4e8" /><path d="M0 10h14l8 20H0z" fill="#6ec4f4" /><path d="M0 24l16 6H0z" fill="#2c3446" />
    <path d="M30 0L12 20M12 8l8 22M14 14l16 2" stroke="#142a4a" strokeWidth="1.400" /><rect width="12" height="9" fill="#fff" />
    <text x="1" y="8" fontFamily="Liberation Sans" fontWeight="700" fontSize="8" fill="#222">64</text>
    <text x="17" y="27" fontFamily="Liberation Serif" fontStyle="italic" fontWeight="700" fontSize="19" fill="#fff">7</text>
  </svg>
);

const apps: { n: string; i: React.ReactNode; o?: boolean; on?: boolean }[] = [
  { n: "Microsoft Edge", i: <Edge />, o: true },
  { n: "Outlook", i: <Office l="O" c="#0072c6" d="#0072c6"><path d="M16 8l4 5 6-6" fill="none" stroke="#0072c6" strokeWidth="1.800" /></Office>, o: true },
  { n: "Teams", i: <TeamsIcon /> },
  { n: "Notepad++", i: <Npp />, o: true },
  { n: "Cloud", i: <CloudIcon /> },
  { n: "SQL Developer", i: <Db />, o: true },
  { n: "OneNote", i: <Office l="N" c="#80397b" d="#80397b" />, o: true },
  { n: "Word", i: <Office l="W" c="#2b579a" d="#2b579a" /> },
  { n: "Excel", i: <Office l="X" c="#217346" d="#217346" />, o: true, on: true },
  { n: "VirtualBox", i: <VBox />, o: true },
  { n: "Blocco note", i: <Note />, o: true },
  { n: "FortiClient", i: <Shield /> },
  { n: "FileZilla", i: <Fz /> },
  { n: "Sublime Text", i: <Sublime /> },
  { n: "Teams, occupato", i: <TeamsIcon busy />, o: true },
  { n: "Chrome", i: <Chrome />, o: true },
  { n: "G", i: <GApp />, o: true },
  { n: "7", i: <Seven />, o: true },
];

export default function App() {
  return (
    <Page>
      <Global />
      <Header>
        <HeaderArt width="640" height="71" viewBox="0 0 640 71" aria-hidden="true">
          <defs><linearGradient id="art"><stop offset="0" stopColor="#1f6a40" stopOpacity="0" /><stop offset=".2" stopColor="#1f6a40" stopOpacity=".8" /></linearGradient></defs>
          <path d="M0 0h640v65H0z" fill="url(#art)" />
          <g fill="#1e623b">
            <path d="M41 48c1-6 4-8 4-9C35 25 40 4 62 2c14 0 20 10 20 20 4-8 14-8 17-3 20-4 29 8 24 17 4 10-12 12-24 10-18 0-34-3-58 2z" />
            <path d="M146 50c8 4 14 3 14 1-10-8-10-28 0-32 8-2 16 0 20 4 8-2 12 0 15-2 3-14 16-20 27-20 22 0 36 18 36 33 0 14-14 24-22 26-30 0-78 8-90-10z" />
            <path d="M285 55c2-10 4-14 10-22-12-8-11-20-11-33h190c2 20-4 32-18 41 10-2 20-4 28-5 0 12-10 14-28 17-50-13-120-12-171 2z" />
            <circle cx="577" cy="45" r="13" />
          </g>
          <circle cx="558" cy="17" r="30" fill="#217246" opacity=".7" />
          <ellipse cx="505" cy="22" rx="24" ry="14" fill="#217246" opacity=".4" />
        </HeaderArt>
        <TitleRow>
          <DocTitle>EnterBudgets (20).xlsx - Excel</DocTitle>
          <WindowButtons>
            <button aria-label="Opzioni barra multifunzione"><svg width="16" height="13" fill="none" stroke="currentColor"><path d="M.5.500h15v12H.5zM.5 3h15M8 11V5M5.500 7.500L8 5l2.500 2.500" /></svg></button>
            <button aria-label="Riduci a icona"><svg width="16" height="13" stroke="currentColor"><path d="M2 6.500h12" /></svg></button>
            <button aria-label="Ripristina"><svg width="16" height="13" fill="none" stroke="currentColor"><path d="M2.500 2.500h9v10h-9zM4.500 2.500v-2h9v10h-2" /></svg></button>
            <button aria-label="Chiudi"><svg width="16" height="13" stroke="currentColor"><path d="M3 .5l12 12M15 .5l-12 12" /></svg></button>
          </WindowButtons>
        </TitleRow>
        <TabRow>
          <Tab $file>File</Tab>
          {tabs.map((t) => <Tab key={t}>{t}</Tab>)}
          <Tab $active>Inserisci importi budget</Tab>
          <TellMe>
            <svg width="13" height="22" viewBox="0 0 13 22" fill="none" stroke="#fff" strokeWidth="1.200"><path d="M3.500 16c0-4-2.800-5-2.800-9a5.800 6 0 0 1 11.600 0c0 4-2.800 5-2.800 9z" /><path d="M3.500 18h6M4.500 20.500h4" strokeWidth="1.800" /></svg>
            Che cosa si desidera fare?
          </TellMe>
          <Account>Giampaolo Platania</Account>
          <Share>
            <svg width="20" height="20" viewBox="0 0 20 20" fill="none" stroke="#fff" strokeWidth="1.400"><ellipse cx="10" cy="6" rx="5" ry="5.300" /><path d="M1 20c0-5 3-8 6.500-9M12 11l2 1M15 11v9M10.500 15.500h9" /></svg>
            Condividi
          </Share>
        </TabRow>
      </Header>

      <Ribbon>
        {groups.map((g) => (
          <RibbonGroup key={g.name}>
            <GroupButtons>
              {g.items.map((b) => <RibbonButton key={b.t} $w={b.w}>{b.i}<span>{b.t}</span></RibbonButton>)}
            </GroupButtons>
            <GroupName>{g.name}</GroupName>
          </RibbonGroup>
        ))}
        <Collapse aria-label="Comprimi barra multifunzione"><svg width="12" height="8" fill="none" stroke="currentColor" strokeWidth="2"><path d="M1 7l5-5 5 5" /></svg></Collapse>
      </Ribbon>

      <QuickBar>
        <button aria-label="Salva"><svg width="16" height="16"><path d="M0 0h16v16H0z" fill="#8a55ab" /><path d="M2 1.500h12V9H2zM4 11h8v5H4z" fill="#fff" /><path d="M6 13h2v3H6z" fill="#8a55ab" /></svg></button>
        <QuickPair $before={14}>
          <button aria-label="Annulla"><svg width="22" height="18" viewBox="0 0 22 18" fill="none" stroke="#b0b0b0" strokeWidth="2.400"><path d="M9 1L3 6.500 9 12M3 6.500h10c7 0 6 9-1 9.500" /></svg></button>
          <Tri d="down" w={6} h={4} c="#c0c0c0" />
        </QuickPair>
        <QuickPair $before={4}>
          <button aria-label="Ripeti"><svg width="22" height="18" viewBox="0 0 22 18" fill="none" stroke="#b0b0b0" strokeWidth="2.400"><path d="M13 1l6 5.500-6 5.500M19 6.500H9c-7 0-6 9 1 9.500" /></svg></button>
          <Tri d="down" w={6} h={4} c="#c0c0c0" />
        </QuickPair>
        <QuickPair $before={6}>
          <button aria-label="Modelli"><svg width="18" height="18" viewBox="0 0 18 18" fill="#0072c6"><path d="M11 0l6 3v7.500L11 14l-6.500-3.500V3z" /><circle cx="4" cy="13.500" r="4" stroke="#e6e6e6" /></svg></button>
          <Tri d="down" w={7} h={4} c="#555" />
        </QuickPair>
        <QuickPair $before={6}>
          <button aria-label="Personalizza barra di accesso rapido"><svg width="6" height="8" fill="#f8f8f8"><path d="M0 0h6v1H0zM0 4h6L3 8z" /></svg></button>
        </QuickPair>
      </QuickBar>

      <FormulaRow>
        <NameBox><NameInput aria-label="Casella nome" defaultValue="F14" /><Tri d="down" w={8} h={5} c="#777" /></NameBox>
        <Grip><Dots /></Grip>
        <FormulaTools>
          <button aria-label="Annulla"><svg width="16" height="14" stroke="#bdbdbd" strokeWidth="2"><path d="M1 1l14 12M15 1L1 13" /></svg></button>
          <button aria-label="Invio"><svg width="18" height="14" fill="none" stroke="#c0c0c0" strokeWidth="3"><path d="M1 8l5 4L17 1" /></svg></button>
          <button aria-label="Inserisci funzione"><svg width="20" height="28"><text x="4" y="18" fontFamily="Liberation Serif" fontStyle="italic" fontSize="20" fill="#555" stroke="#555" strokeWidth=".4">f<tspan fontSize="15" dy="2">x</tspan></text></svg></button>
        </FormulaTools>
        <FormulaBox>
          <NameInput aria-label="Barra della formula" />
          <svg width="12" height="8" fill="none" stroke="#777" strokeWidth="3"><path d="M1 1l5 4 5-4" /></svg>
        </FormulaBox>
      </FormulaRow>

      <SheetArea>
        <SheetClip><Sheet /></SheetClip>
        <VScroll>
          <ScrollButton aria-label="Scorri su"><Tri d="up" w={10} h={5} /></ScrollButton>
          <VTrack><Thumb /></VTrack>
          <ScrollButton aria-label="Scorri giù"><Tri d="down" w={10} h={5} /></ScrollButton>
        </VScroll>
      </SheetArea>

      <SheetTabs>
        <TabNav><Tri d="left" w={5} h={9} /><Tri d="right" w={5} h={9} /></TabNav>
        <SheetTab>Inserisci importi budget</SheetTab>
        <AddTab aria-label="Nuovo foglio"><svg width="21" height="21" fill="none" stroke="currentColor"><circle cx="10.500" cy="10.500" r="9.500" strokeWidth="1.200" /><path d="M5.500 10.500h10M10.500 5.500v10" strokeWidth="2" /></svg></AddTab>
        <HScroll>
          <SplitGrip><Dots /></SplitGrip>
          <ScrollButton aria-label="Scorri a sinistra"><Tri d="left" w={5} h={9} /></ScrollButton>
          <HTrack><Thumb /></HTrack>
          <ScrollButton aria-label="Scorri a destra"><Tri d="right" w={5} h={9} /></ScrollButton>
        </HScroll>
      </SheetTabs>

      <StatusBar>
        Pronto
        <RecordIcon aria-label="Registra macro"><svg width="15" height="16" fill="none" stroke="#777"><path d="M1.500 5.500h13v10h-13z" /><path d="M3 8.500h10M3 11h10M3 13.500h10" strokeDasharray="2 1" /><path d="M8 1h7v4H8z" fill="#777" stroke="none" /><circle cx="3.500" cy="3.500" r="3.500" fill="#777" stroke="none" /></svg></RecordIcon>
        <Views>
          <ViewButton $on aria-label="Normale"><svg width="14" height="14" fill="none" stroke="#666"><path d="M.5.500h13v13H.5zM.5 5h13M.5 9.500h13M5 .5v13M9.500.500v13" /></svg></ViewButton>
          <ViewButton aria-label="Layout di pagina"><svg width="14" height="14" fill="none" stroke="#666"><path d="M.5.500h13v13H.5zM3 2.500h8v9H3zM5 5h4M5 7h4M5 9h4" /></svg></ViewButton>
          <ViewButton aria-label="Interruzioni di pagina"><svg width="14" height="14" fill="none" stroke="#666"><path d="M.5.500h13v13H.5zM.5 8.500h9V.5M5 .5v8" /></svg></ViewButton>
        </Views>
        <button aria-label="Zoom indietro"><svg width="10" height="12"><path d="M0 5h10v2H0z" fill="#666" /></svg></button>
        <ZoomRange type="range" aria-label="Zoom" defaultValue={50} />
        <button aria-label="Zoom avanti"><svg width="12" height="12"><path d="M0 5h12v2H0zM5 0h2v12H5z" fill="#666" /></svg></button>
        <ZoomValue>100%</ZoomValue>
      </StatusBar>

      <Taskbar>
        <Start aria-label="Start"><svg width="20" height="20" fill="#fff"><path d="M0 3l8.500-1.300v7.800H0zM9.500 1.500L20 0v9.500H9.500zM0 10.500h8.500v7.800L0 17zM9.500 10.500H20V20L9.500 18.500z" /></svg></Start>
        <Search>
          <svg width="21" height="21" fill="none" stroke="#222" strokeWidth="1.600"><circle cx="13" cy="7.500" r="6.500" /><path d="M8.500 12L1 20" /></svg>
          <SearchInput aria-label="Cerca" placeholder="Cerca" />
        </Search>
        <Apps>
          <TaskButton $w={62} aria-label="Visualizzazione attività"><TaskView /></TaskButton>
          {apps.map((a) => <TaskButton key={a.n} aria-label={a.n} $open={a.o} $on={a.on}>{a.i}</TaskButton>)}
        </Apps>
        <Tray>
          <AriaButton>
            <svg width="25" height="30" viewBox="0 0 25 30"><path d="M4 0l18 5v21L4 30z" fill="#c82222" /><path d="M0 12c6-3 8 3 13 0s7 0 12 0M0 18c6-3 8 3 13 0s7 0 12 0M0 24c6-3 8 3 13 0s7 0 12 0" fill="none" stroke="#e86a6a" strokeWidth="1.300" /></svg>
            Aria:...
          </AriaButton>
          <TrayIcons>
            <svg width="16" height="9" fill="none" stroke="#fff" strokeWidth="1.400"><path d="M1 8l7-7 7 7" /></svg>
            <svg width="20" height="20" fill="none" stroke="#fff" strokeWidth="1.300"><path d="M10 18H1V4l17-3v11M5 8c3-4 6-2 7 0M12 5v3H9M12 11c-2 4-5 3-7 1M5 14v-3h3" /><circle cx="15.500" cy="15" r="4.500" fill="#ff9800" stroke="none" /></svg>
            <svg width="20" height="14" fill="none" stroke="#fff" strokeWidth="1.300"><path d="M5 3h13v10H5V9M18 6h2v4h-2M1 1v3h4V1M3 4v4h2" /><path d="M7 5h9v6H7z" fill="#fff" stroke="none" /></svg>
            <svg width="17" height="16" fill="none" stroke="#fff" strokeWidth="1.200"><path d="M1 15C1 7 8 1 16 1M5 15c0-6 5-10 11-10M9 15c0-4 3-6 7-6" /><circle cx="14" cy="13.500" r="2" fill="#fff" stroke="none" /></svg>
            <svg width="21" height="16" fill="none" stroke="#fff" strokeWidth="1.200"><path d="M1 5h3l5-4v14l-5-4H1zM12 5c2 2 2 4 0 6M15 3c3 3 3 7 0 10M18 1c4 4 4 10 0 14" /></svg>
          </TrayIcons>
          <Lang>ITA</Lang>
          <Clock><time>15:15<br />14/11/2024</time></Clock>
          <Notices aria-label="18 notifiche"><svg width="32" height="32" viewBox="0 0 32 32"><path d="M1 1h20v16H7l-4 4v-4H1z" fill="#fff" /><path d="M4 5.500h14M4 9h14M4 12.500h9" stroke="#203634" strokeWidth="1.500" /><circle cx="21" cy="21" r="10.500" fill="#3c3c3c" stroke="#888" /><text x="21" y="26" fontFamily="Open Sans" fontWeight="600" fontSize="13" fill="#fff" textAnchor="middle">18</text></svg></Notices>
          <ShowDesktop aria-label="Mostra desktop" />
        </Tray>
      </Taskbar>

      <Dialog role="dialog" aria-labelledby="dlg-title">
        <DialogBar>
          <DialogTitle id="dlg-title">Inserisci budget in foglio di calcolo</DialogTitle>
          <button aria-label="Chiudi"><svg width="12" height="12" stroke="#000" strokeWidth="1.100"><path d="M0 0l12 12M12 0L0 12" /></svg></button>
        </DialogBar>
        <DialogMain>
          <Pane>
            <PaneHead>
              <PaneTitle>Flexfield chiave</PaneTitle>
              <button aria-label="Chiudi riquadro"><svg width="7" height="12" fill="none" stroke="#333" strokeWidth="2.500"><path d="M1 1l5 5-5 5" /></svg></button>
            </PaneHead>
            <Disclosure>
              <DisclosureButton aria-label="Nascondi segmenti"><svg width="14" height="14"><path d="M14 0v14H0z" fill="#8a9096" /></svg></DisclosureButton>
              Nascondi segmenti
            </Disclosure>
            {fields.map(([n, w]) => (
              <Field key={n}>
                <FieldLabel htmlFor={n}>{n}</FieldLabel>
                <Combo $w={w}>
                  <ComboInput id={n} />
                  <ComboButton aria-label={`Cerca ${n}`}><Tri d="down" w={11} h={9} c="#000" /></ComboButton>
                </Combo>
              </Field>
            ))}
          </Pane>
          <PaneScroll><Tri d="up" w={13} h={7} /><PaneTrack><PaneThumb /></PaneTrack><Tri d="down" w={13} h={7} /></PaneScroll>
        </DialogMain>
        <BottomScroll><Tri d="left" w={7} h={13} /><BottomTrack><BottomThumb /></BottomTrack><Tri d="right" w={7} h={13} /></BottomScroll>
      </Dialog>
    </Page>
  );
}
